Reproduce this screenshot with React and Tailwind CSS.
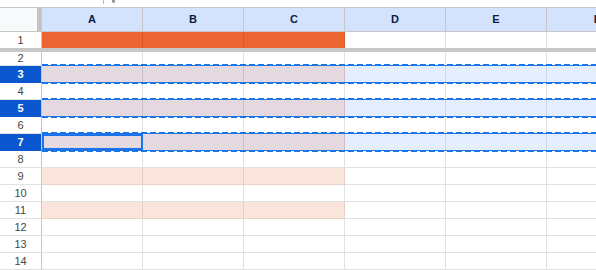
import React from "react";

const COLS = ["A", "B", "C", "D", "E", "F"];
const SELECTED = [3, 5, 7];
const PEACH = [9, 11];

function Dashes({ pos }) {
  const dashed = (
    <span className="h-px bg-[repeating-linear-gradient(90deg,#1a73e8_0_6px,#ffffff_6px_9px)]" />
  );
  const solid = <span className="h-px bg-[#1a73e8]" />;
  return (
    <span
      className={`absolute left-[42px] right-0 h-[2px] z-10 flex flex-col ${
        pos === "top" ? "-top-[2px]" : "-bottom-[1px]"
      }`}
    >
      {pos === "top" ? dashed : solid}
      {pos === "top" ? solid : dashed}
    </span>
  );
}

function Cell({ bg, children }) {
  return (
    <div className={`relative w-[101px] shrink-0 h-full border-r ${bg}`}>
      {children}
    </div>
  );
}

function GridRow({ n }) {
  const selected = SELECTED.includes(n);
  const peach = PEACH.includes(n);
  const h = n === 2 ? "h-[14px]" : "h-[17px]";

  return (
    <div className={`relative flex ${h} shrink-0`}>
      <div
        className={`w-[42px] shrink-0 h-full flex items-center justify-center border-r border-r-[#c4c7c5] border-b text-[11px] ${
          selected
            ? "bg-[#0b57d0] text-white font-bold border-b-[#0b57d0]"
            : "bg-white text-[#444746] border-b-[#e1e1e1]"
        }`}
      >
        {n}
      </div>
      {COLS.map((c, i) => {
        let bg = "bg-white border-[#e1e1e1] border-b";
        if (selected) {
          bg =
            i < 3
              ? "bg-[#e3d9de] border-r-[#cbbfc5] border-b border-b-[#e3d9de]"
              : "bg-[#e5eefd] border-r-[#cfd8e6] border-b border-b-[#e5eefd]";
        } else if (peach && i < 3) {
          bg = "bg-[#f9e5dc] border-r-[#e4cfc6] border-b border-b-[#e6d3ca]";
        }
        return (
          <Cell key={c} bg={bg}>
            {n === 7 && i === 0 && (
              <span className="absolute top-0 left-0 -right-px bottom-0 border-2 border-[#1a73e8] z-20" />
            )}
          </Cell>
        );
      })}
      {selected && <Dashes pos="top" />}
      {selected && <Dashes pos="bottom" />}
    </div>
  );
}

export default function App() {
  const rows = [];
  for (let n = 2; n <= 14; n++) rows.push(n);

  return (
    <div className="w-[596px] h-[270px] overflow-hidden bg-white font-['Liberation_Sans',Arial,sans-serif] flex flex-col">
      {/* cut-off toolbar */}
      <div className="relative h-[7px] shrink-0 bg-white">
        <span className="absolute left-[103px] top-0 w-px h-[4px] bg-[#b7b7b7]" />
        <span className="absolute left-[112px] top-0 w-[3px] h-[3px] rounded-b-full bg-[#9a9a9a]" />
      </div>

      {/* column headers */}
      <div className="flex h-[25px] shrink-0 border-y border-[#c4c7c5]">
        <div className="w-[42px] shrink-0 flex">
          <div className="w-[37px] bg-[#f8f9fa]" />
          <div className="w-[5px] bg-[#c4c4c4]" />
        </div>
        {COLS.map((c) => (
          <div
            key={c}
            className="w-[101px] shrink-0 flex items-center justify-center border-r border-[#c4c7c5] bg-[#d3e3fd] text-[11px] font-bold text-[#0b1d45]"
          >
            {c}
          </div>
        ))}
      </div>

      {/* row 1 (frozen) */}
      <div className="flex h-[16px] shrink-0">
        <div className="w-[42px] shrink-0 flex items-center justify-center border-r border-[#c4c7c5] text-[11px] text-[#444746]">
          1
        </div>
        {COLS.map((c, i) => (
          <div
            key={c}
            className={`w-[101px] shrink-0 border-r ${
              i < 3 ? "bg-[#ec6532] border-[#d85a2b]" : "bg-white border-[#e1e1e1]"
            }`}
          />
        ))}
      </div>

      {/* freeze bar */}
      <div className="h-[4px] shrink-0 bg-[#c7c7c7]" />

      {rows.map((n) => (
        <GridRow key={n} n={n} />
      ))}
    </div>
  );
}
